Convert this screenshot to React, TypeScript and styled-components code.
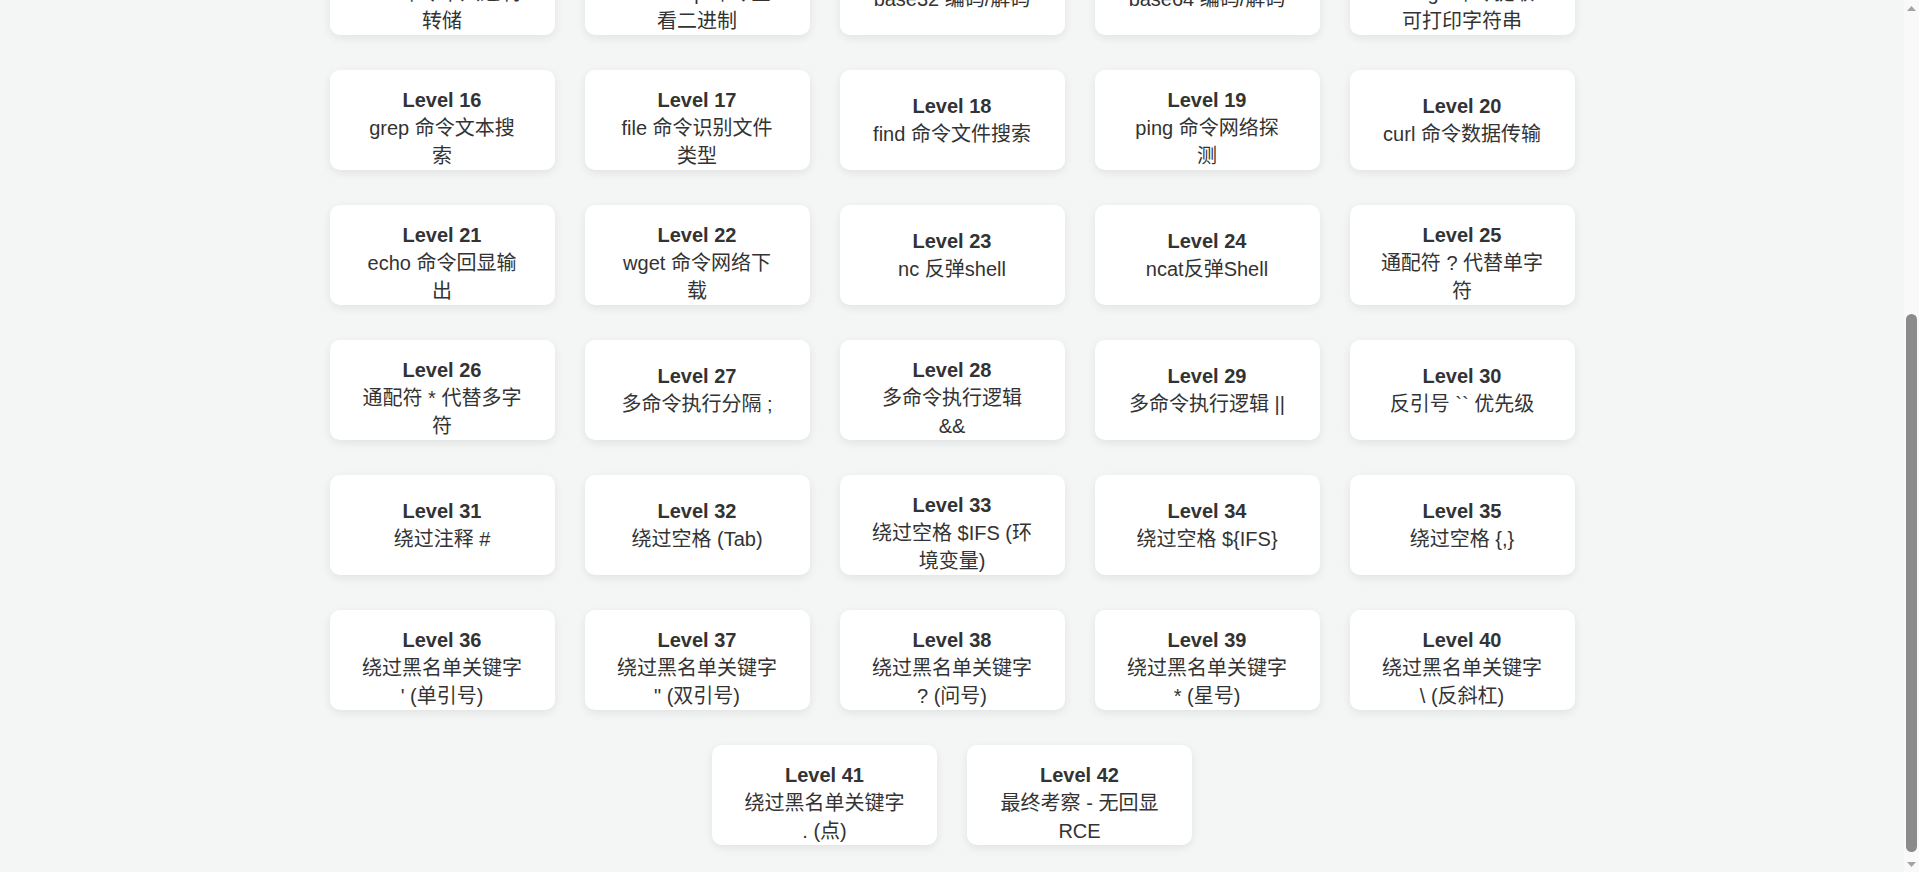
import React, {useLayoutEffect} from "react";
import styled, {createGlobalStyle} from "styled-components";

const Global = createGlobalStyle`
  html {
    scroll-behavior: auto;
  }
  body {
    margin: 0;
    background: #f4f6f6;
    color: #333;
    font-family: "Liberation Sans", Arial, "Noto Sans CJK SC", sans-serif;
  }
`;

const Page = styled.div`
  padding: 40px 0 36px;
  margin-right: 15px;
`;

const Header = styled.h1`
  margin: 0 0 62px;
  font-size: 32px;
  line-height: 48px;
  text-align: center;
  font-weight: bold;
`;

const Levels = styled.div`
  width: 1245px;
  margin: 0 auto;
  display: flex;
  flex-wrap: wrap;
  justify-content: center;
  gap: 35px 30px;
`;

const Card = styled.a`
  width: 225px;
  height: 100px;
  box-sizing: border-box;
  padding: 16px 31px;
  display: flex;
  flex-direction: column;
  background: #fff;
  border-radius: 10px;
  box-shadow: 0 3px 10px rgba(0, 0, 0, 0.08);
  color: #333;
  text-decoration: none;
  text-align: center;
  cursor: pointer;
`;

const Body = styled.div`
  margin: auto 0;
  font-size: 20px;
  line-height: 28px;
`;

const Title = styled.div`
  font-weight: bold;
`;

// browser scrollbar, drawn since the headless window hides its own
const ScrollBar = styled.div`
  position: fixed;
  top: 0;
  right: 0;
  width: 15px;
  height: 100vh;
  background: #f9f9f9;
  display: flex;
  flex-direction: column;
`;

const Arrow = styled.div`
  height: 16px;
  display: flex;
  align-items: center;
  justify-content: center;
`;

const Track = styled.div`
  flex: 1;
  position: relative;
`;

const Thumb = styled.div<{top: number; size: number}>`
  position: absolute;
  left: 2px;
  right: 2px;
  top: ${p => p.top}px;
  height: ${p => p.size}px;
  background: #8b8b8b;
  border-radius: 6px;
`;

const levels = [
  "ls 命令目录列举",
  "cat 命令读取文件",
  "more 命令分页查看",
  "less 命令分页浏览",
  "head 命令查看开头",
  "tail 命令查看结尾",
  "tac 命令倒序输出",
  "nl 命令带行号输出",
  "sort 命令排序输出",
  "uniq 命令去重输出",
  "xxd 命令十六进制转储",
  "hexdump 命令查看二进制",
  "base32 编码/解码",
  "base64 编码/解码",
  "strings 命令提取可打印字符串",
  "grep 命令文本搜索",
  "file 命令识别文件类型",
  "find 命令文件搜索",
  "ping 命令网络探测",
  "curl 命令数据传输",
  "echo 命令回显输出",
  "wget 命令网络下载",
  "nc 反弹shell",
  "ncat反弹Shell",
  "通配符 ? 代替单字符",
  "通配符 * 代替多字符",
  "多命令执行分隔 ;",
  "多命令执行逻辑 &&",
  "多命令执行逻辑 ||",
  "反引号 `` 优先级",
  "绕过注释 #",
  "绕过空格 (Tab)",
  "绕过空格 $IFS (环境变量)",
  "绕过空格 ${IFS}",
  "绕过空格 {,}",
  "绕过黑名单关键字 ' (单引号)",
  "绕过黑名单关键字 \" (双引号)",
  "绕过黑名单关键字 ? (问号)",
  "绕过黑名单关键字 * (星号)",
  "绕过黑名单关键字 \\ (反斜杠)",
  "绕过黑名单关键字 . (点)",
  "最终考察 - 无回显RCE",
];

export default function App() {
  // the screenshot is taken with the list scrolled down
  useLayoutEffect(() => {
    window.scrollTo(0, 485);
  }, []);

  return <>
    <Global />
    <Page>
      <Header>命令执行靶场</Header>
      <Levels>
        {levels.map((desc, i) =>
          <Card key={i} href={`#level${i + 1}`}>
            <Body>
              <Title>Level {i + 1}</Title>
              <div>{desc}</div>
            </Body>
          </Card>
        )}
      </Levels>
    </Page>
    <ScrollBar>
      <Arrow>
        <svg width="9" height="5" viewBox="0 0 9 5"><polygon points="0,5 4.5,0 9,5" fill="#a3a3a3" /></svg>
      </Arrow>
      <Track>
        <Thumb top={298} size={538} />
      </Track>
      <Arrow>
        <svg width="9" height="5" viewBox="0 0 9 5"><polygon points="0,0 4.5,5 9,0" fill="#a3a3a3" /></svg>
      </Arrow>
    </ScrollBar>
  </>;
}
